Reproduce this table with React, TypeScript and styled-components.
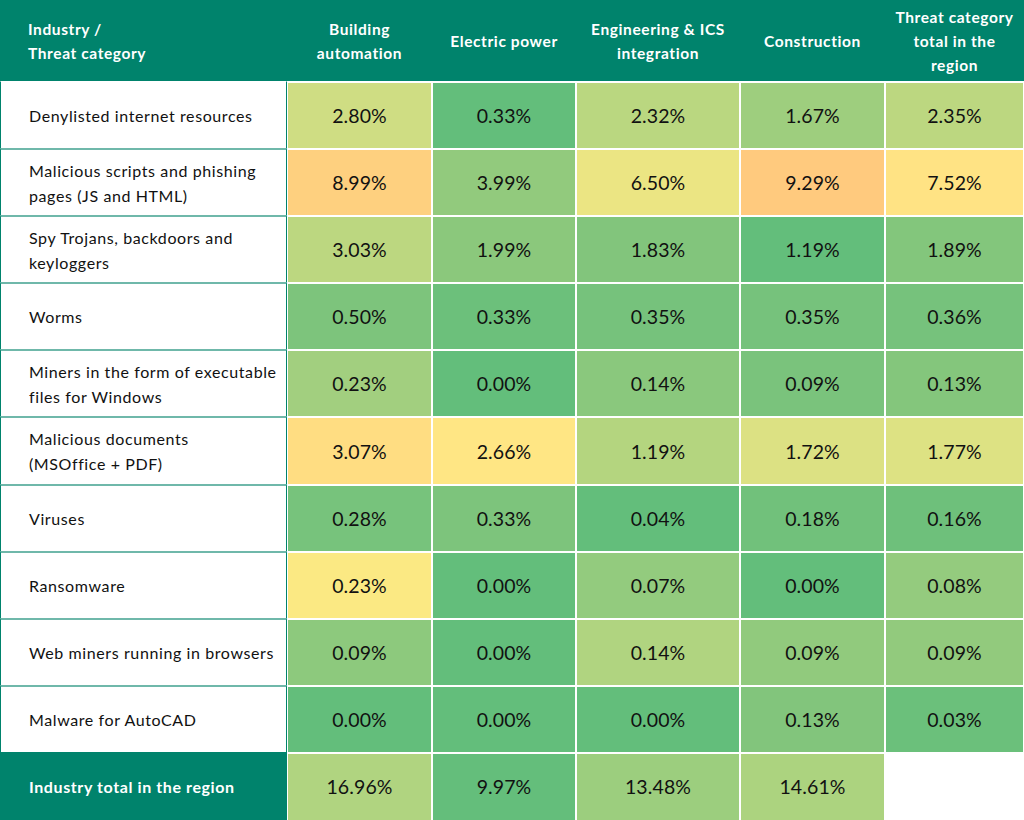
import React from 'react'
import styled, { createGlobalStyle } from 'styled-components'

const teal = '#00836c'

const GlobalStyle = createGlobalStyle`
  html, body {
    margin: 0;
    padding: 0;
    background: #ffffff;
  }
  body {
    font-family: Lato, "Open Sans", "Liberation Sans", sans-serif;
    color: #111;
  }
`

const Table = styled.div`
  display: grid;
  grid-template-columns: 287px 145px 144px 164px 145px 139px;
  grid-template-rows: 81px repeat(10, 67.1px) 68px;
  width: 1024px;
  height: 820px;
  background: #ffffff;
`

const HeadCell = styled.div<{ first?: boolean }>`
  background: ${teal};
  color: #ffffff;
  font-weight: 700;
  font-size: 15.5px;
  line-height: 24px;
  letter-spacing: 0.6px;
  display: flex;
  align-items: center;
  justify-content: ${({ first }) => (first ? 'flex-start' : 'center')};
  text-align: ${({ first }) => (first ? 'left' : 'center')};
  padding: ${({ first }) => (first ? '0 0 0 28px' : '0 4px')};
  box-sizing: border-box;
`

const LabelCell = styled.div<{ total?: boolean; firstRow?: boolean }>`
  display: flex;
  align-items: center;
  box-sizing: border-box;
  padding: 0 4px 0 28px;
  font-size: 16px;
  line-height: 25px;
  letter-spacing: 0.6px;
  background: ${({ total }) => (total ? teal : '#ffffff')};
  color: ${({ total }) => (total ? '#ffffff' : '#111111')};
  font-weight: ${({ total }) => (total ? 700 : 400)};
  border-left: 1px solid ${teal};
  border-right: 1px solid ${teal};
  border-top: ${({ total, firstRow }) =>
    total ? `1px solid ${teal}` : firstRow ? '1px solid #ffffff' : '2px solid #6fb8aa'};
`

const ValueCell = styled.div<{ bg: string }>`
  display: flex;
  align-items: center;
  justify-content: center;
  box-sizing: border-box;
  background: ${({ bg }) => bg};
  border-top: 2px solid #ffffff;
  border-left: 1px solid #ffffff;
  border-right: 1px solid #ffffff;
  font-size: 19.5px;
  letter-spacing: 0.1px;
  color: #111111;
`

const headers = [
  'Building\nautomation',
  'Electric power',
  'Engineering & ICS\nintegration',
  'Construction',
  'Threat category\ntotal in the\nregion',
]

type Cell = [string, string]

const rows: { label: string; cells: Cell[] }[] = [
  {
    label: 'Denylisted internet resources',
    cells: [['2.80%', '#cfdd83'], ['0.33%', '#63be7b'], ['2.32%', '#bad780'], ['1.67%', '#9ece7e'], ['2.35%', '#bcd780']],
  },
  {
    label: 'Malicious scripts and phishing\npages (JS and HTML)',
    cells: [['8.99%', '#fed07f'], ['3.99%', '#92ca7d'], ['6.50%', '#ebe583'], ['9.29%', '#ffca7e'], ['7.52%', '#ffe384']],
  },
  {
    label: 'Spy Trojans, backdoors and\nkeyloggers',
    cells: [['3.03%', '#bcd780'], ['1.99%', '#8bc87c'], ['1.83%', '#82c57c'], ['1.19%', '#63be7b'], ['1.89%', '#83c67c']],
  },
  {
    label: 'Worms',
    cells: [['0.50%', '#7dc47c'], ['0.33%', '#6cc07b'], ['0.35%', '#76c27c'], ['0.35%', '#76c27c'], ['0.36%', '#76c27c']],
  },
  {
    label: 'Miners in the form of executable\nfiles for Windows',
    cells: [['0.23%', '#a2cf7f'], ['0.00%', '#63be7b'], ['0.14%', '#8ac87d'], ['0.09%', '#7ac37c'], ['0.13%', '#84c67c']],
  },
  {
    label: 'Malicious documents\n(MSOffice + PDF)',
    cells: [['3.07%', '#ffdd82'], ['2.66%', '#ffe684'], ['1.19%', '#b4d57f'], ['1.72%', '#dce183'], ['1.77%', '#dde283']],
  },
  {
    label: 'Viruses',
    cells: [['0.28%', '#77c37c'], ['0.33%', '#7dc47c'], ['0.04%', '#63be7b'], ['0.18%', '#71c17b'], ['0.16%', '#6ec07b']],
  },
  {
    label: 'Ransomware',
    cells: [['0.23%', '#fbe983'], ['0.00%', '#63be7b'], ['0.07%', '#93cb7e'], ['0.00%', '#63be7b'], ['0.08%', '#94cb7e']],
  },
  {
    label: 'Web miners running in browsers',
    cells: [['0.09%', '#8dc97d'], ['0.00%', '#63be7b'], ['0.14%', '#b0d480'], ['0.09%', '#91ca7d'], ['0.09%', '#92ca7d']],
  },
  {
    label: 'Malware for AutoCAD',
    cells: [['0.00%', '#63be7b'], ['0.00%', '#63be7b'], ['0.00%', '#63be7b'], ['0.13%', '#82c57c'], ['0.03%', '#6bc07b']],
  },
]

const totals: Cell[] = [
  ['16.96%', '#b0d480'],
  ['9.97%', '#64be7b'],
  ['13.48%', '#9cce7e'],
  ['14.61%', '#acd37f'],
  ['', '#ffffff'],
]

const Lines = ({ text }: { text: string }) => (
  <span>
    {text.split('\n').map((line, i) => (
      <React.Fragment key={i}>
        {i > 0 && <br />}
        {line}
      </React.Fragment>
    ))}
  </span>
)

export default function App() {
  return (
    <>
      <GlobalStyle />
      <Table>
        <HeadCell first>
          <Lines text={'Industry /\nThreat category'} />
        </HeadCell>
        {headers.map((h) => (
          <HeadCell key={h}>
            <Lines text={h} />
          </HeadCell>
        ))}
        {rows.map((row, r) => (
          <React.Fragment key={row.label}>
            <LabelCell firstRow={r === 0}>
              <Lines text={row.label} />
            </LabelCell>
            {row.cells.map(([value, bg], i) => (
              <ValueCell key={i} bg={bg}>
                {value}
              </ValueCell>
            ))}
          </React.Fragment>
        ))}
        <LabelCell total>Industry total in the region</LabelCell>
        {totals.map(([value, bg], i) => (
          <ValueCell key={i} bg={bg}>
            {value}
          </ValueCell>
        ))}
      </Table>
    </>
  )
}
